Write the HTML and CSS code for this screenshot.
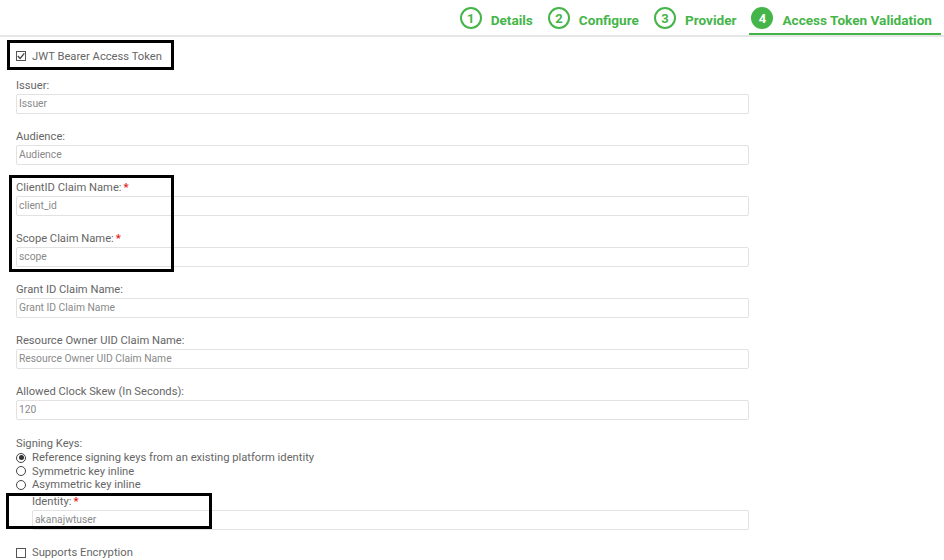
FILE: index.html
```html
<!DOCTYPE html>
<html>
<head>
<meta charset="utf-8">
<link rel="stylesheet" href="styles.css">
</head>
<body>
<div class="page">
  <div class="stepper">
    <div class="step"><span class="num">1</span><span class="step-label">Details</span></div>
    <div class="step"><span class="num">2</span><span class="step-label">Configure</span></div>
    <div class="step"><span class="num">3</span><span class="step-label">Provider</span></div>
    <div class="step active"><span class="num">4</span><span class="step-label">Access Token Validation</span></div>
  </div>

  <div class="form">
    <div class="check-row top-check"><span class="box checked"><svg viewBox="0 0 10 10" width="10" height="10"><path d="M1.8 5 L4.1 7.4 L8.3 2.3" fill="none" stroke="#444" stroke-width="1.3"/></svg></span>JWT Bearer Access Token</div>

    <div class="field"><div class="label">Issuer:</div><div class="input placeholder">Issuer</div></div>
    <div class="field"><div class="label">Audience:</div><div class="input placeholder">Audience</div></div>
    <div class="field"><div class="label">ClientID Claim Name:<span class="req">*</span></div><div class="input">client_id</div></div>
    <div class="field"><div class="label">Scope Claim Name:<span class="req">*</span></div><div class="input">scope</div></div>
    <div class="field"><div class="label">Grant ID Claim Name:</div><div class="input placeholder">Grant ID Claim Name</div></div>
    <div class="field"><div class="label">Resource Owner UID Claim Name:</div><div class="input placeholder">Resource Owner UID Claim Name</div></div>
    <div class="field last"><div class="label">Allowed Clock Skew (In Seconds):</div><div class="input">120</div></div>

    <div class="signing">
      <div class="label">Signing Keys:</div>
      <div class="radio-row"><span class="radio on"></span>Reference signing keys from an existing platform identity</div>
      <div class="radio-row"><span class="radio"></span>Symmetric key inline</div>
      <div class="radio-row"><span class="radio"></span>Asymmetric key inline</div>
      <div class="field nested"><div class="label">Identity:<span class="req">*</span></div><div class="input">akanajwtuser</div></div>
    </div>

    <div class="check-row"><span class="box"></span>Supports Encryption</div>
  </div>

  <div class="mark mark-jwt"></div>
  <div class="mark mark-claims"></div>
  <div class="mark mark-identity"></div>
</div>
</body>
</html>
```
FILE: styles.css
```css
html, body {
  margin: 0;
  padding: 0;
  background: #fff;
}
body {
  font-family: Roboto, "Liberation Sans", sans-serif;
  color: #666;
}
.page {
  position: relative;
  width: 944px;
  height: 560px;
  overflow: hidden;
}
.stepper {
  display: flex;
  justify-content: flex-end;
  gap: 4px;
  height: 35px;
  padding-right: 3px;
  border-bottom: 2px solid #e6e6e6;
}
.step {
  box-sizing: border-box;
  height: 35px;
  display: flex;
  align-items: center;
  padding: 3px 9px 0 2px;
  border-bottom: 2px solid transparent;
  color: #45b549;
  font-weight: 700;
  font-size: 13.6px;
}
.step.active {
  border-bottom-color: #45b549;
}
.num {
  box-sizing: border-box;
  width: 22px;
  height: 22px;
  border: 2px solid #45b549;
  border-radius: 50%;
  display: flex;
  align-items: center;
  justify-content: center;
  font-size: 13px;
  font-weight: 700;
  margin-right: 9px;
}
.step.active .num {
  background: #45b549;
  color: #fff;
}
.step-label {
  padding-top: 4px;
}
.form {
  width: 733px;
  padding-left: 16px;
}
.check-row {
  display: flex;
  align-items: center;
  height: 14px;
  font-size: 11.2px;
  color: #666;
}
.top-check {
  margin-top: 12px;
  margin-bottom: 16px;
}
.box {
  box-sizing: border-box;
  width: 10px;
  height: 10px;
  border: 1px solid #555;
  margin-right: 6px;
  display: flex;
  align-items: center;
  justify-content: center;
}
.box svg {
  display: block;
  flex: none;
}
.field {
  margin-bottom: 16px;
}
.field.last {
  margin-bottom: 17px;
}
.label {
  font-size: 11.2px;
  line-height: 14px;
  height: 14px;
  color: #666;
  white-space: nowrap;
}
.req {
  color: #e21a1a;
  font-weight: 700;
  margin-left: 2px;
}
.input {
  box-sizing: border-box;
  margin-top: 1px;
  height: 20px;
  border: 1px solid #e2e2e2;
  border-radius: 2px;
  padding-left: 2px;
  font-size: 10.3px;
  line-height: 18px;
  color: #8a8a8a;
}
.signing {
  margin-bottom: 16px;
}
.radio-row {
  display: flex;
  align-items: center;
  height: 13.5px;
  font-size: 11.2px;
  color: #666;
}
.radio {
  box-sizing: border-box;
  width: 10px;
  height: 10px;
  border: 1px solid #444;
  border-radius: 50%;
  margin-right: 6px;
  display: flex;
  align-items: center;
  justify-content: center;
}
.radio.on::after {
  content: "";
  width: 5px;
  height: 5px;
  border-radius: 50%;
  background: #333;
}
.field.nested {
  margin: 3px 0 0 16px;
}
.mark {
  position: absolute;
  box-sizing: border-box;
  border: 3px solid #000;
}
.mark-jwt {
  left: 7px;
  top: 40px;
  width: 167px;
  height: 30px;
}
.mark-claims {
  left: 9px;
  top: 175px;
  width: 165px;
  height: 97px;
}
.mark-identity {
  left: 6px;
  top: 493px;
  width: 206px;
  height: 36px;
}
```
